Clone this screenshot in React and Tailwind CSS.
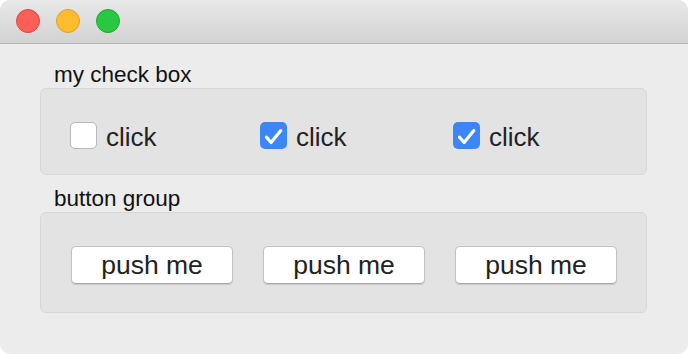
const font = { fontFamily: '"Liberation Sans", Arial, sans-serif' }

const Light = ({ color }) => (
  <div className={`h-[24px] w-[24px] rounded-full border ${color}`}></div>
)

const CheckBox = ({ checked, width }) => (
  <div className={`flex items-center ${width}`}>
    {checked ? (
      <div className="h-[27px] w-[27px] rounded-[5px] bg-[#3b87f7]">
        <svg width="27" height="27" viewBox="0 0 27 27" fill="none">
          <path d="M6.5 15.2l4.6 5.3L20.8 8.6" stroke="white" strokeWidth="3.2" strokeLinecap="round" strokeLinejoin="round" />
        </svg>
      </div>
    ) : (
      <div className="h-[27px] w-[27px] rounded-[5px] border border-[#b8b8b8] bg-white"></div>
    )}
    <span className="ml-[9px] mt-[4px] text-[26px] leading-[27px] text-[#222]">click</span>
  </div>
)

const PushButton = () => (
  <button className="h-[38px] w-[162px] rounded-[5px] border border-[#c3c3c3] border-b-[#a9a9a9] bg-white text-[26.5px] leading-[34px] text-[#222] shadow-[0_1px_1px_rgba(0,0,0,0.12)]">
    push me
  </button>
)

export default function App() {
  return (
    <div className="h-[354px] w-[688px] bg-white" style={font}>
      <div className="flex h-full w-full flex-col overflow-hidden rounded-[10px] bg-[#ececec]">
        <div className="flex h-[44px] shrink-0 items-center gap-[16px] border-b border-[#b6b6b6] bg-gradient-to-b from-[#e8e8e8] to-[#d3d3d3] pl-[16px] pb-[1px]">
          <Light color="border-[#e1463f] bg-[#fe5f57]" />
          <Light color="border-[#dfa124] bg-[#febc2e]" />
          <Light color="border-[#1aab2b] bg-[#28c840]" />
        </div>

        <div className="pt-[19px] pl-[40px]">
          <div className="h-[25px] pl-[14px] text-[22.5px] leading-[24px] text-[#111]">my check box</div>
          <div className="flex h-[87px] w-[607px] items-start rounded-[6px] border border-[#d7d7d7] bg-[#e3e3e3] pt-[31px] pl-[29px]">
            <CheckBox width="w-[190px]" />
            <CheckBox checked width="w-[193px]" />
            <CheckBox checked width="w-[150px]" />
          </div>

          <div className="mt-[12px] h-[25px] pl-[14px] text-[22.5px] leading-[24px] text-[#111]">button group</div>
          <div className="flex h-[101px] w-[607px] items-start gap-[30px] rounded-[6px] border border-[#d7d7d7] bg-[#e3e3e3] pt-[33px] pl-[30px]">
            <PushButton />
            <PushButton />
            <PushButton />
          </div>
        </div>
      </div>
    </div>
  )
}
